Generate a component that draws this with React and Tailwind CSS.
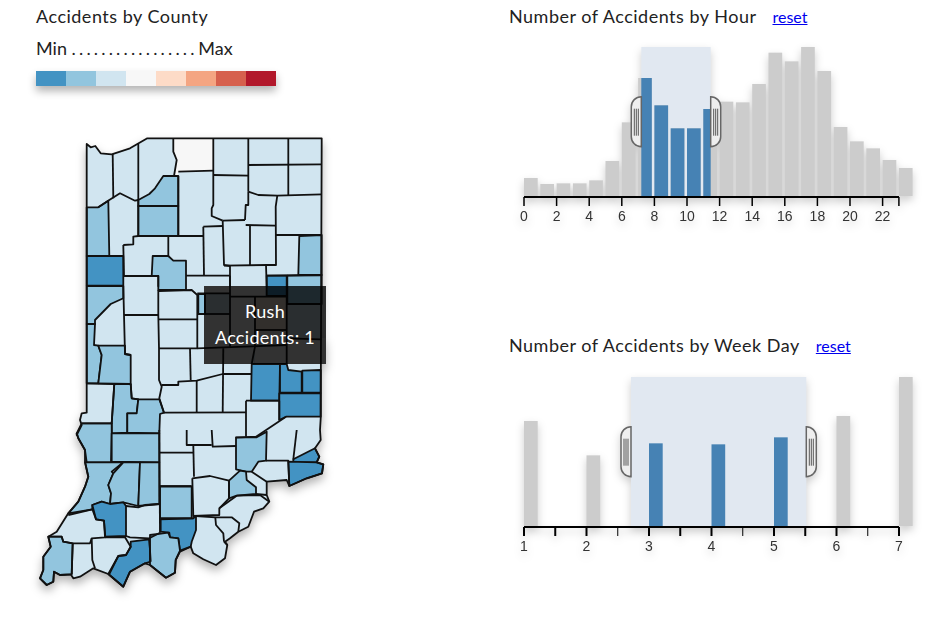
const z2 = (pts) => pts.map(([x, y]) => [70 + x / 3, 130 + y / 3]);
const z3 = (pts) => pts.map(([x, y]) => [70 + x / 3, 280 + y / 3]);
const z4 = (pts) => pts.map(([x, y]) => [30 + x / 3, 430 + y / 3]);
const toD = (pts, close) =>
  "M" + pts.map(([x, y]) => x.toFixed(1) + " " + y.toFixed(1)).join("L") + (close ? "Z" : "");

const LIGHT = "#d1e5f0";
const MID = "#92c5de";
const DARK = "#4393c3";

// state outline, clockwise from the north west corner
const outline = [
  ...z2([[50, 42], [62, 52], [76, 48], [92, 70], [125, 73], [180, 55], [232, 25], [755, 25]]),
  ...z3([[752, 415]]),
  ...z4([
    [870, 0], [872, 30], [855, 55], [868, 80], [860, 97], [880, 103], [876, 130], [830, 145], [778, 168],
    [770, 150], [710, 155], [710, 195], [718, 215], [700, 235], [672, 245], [655, 290], [625, 305], [600, 325],
    [585, 335], [592, 345], [585, 385], [558, 405], [520, 388], [490, 370], [482, 350], [450, 365], [437, 390],
    [435, 428], [408, 443], [360, 405], [345, 400], [300, 425], [280, 470], [235, 432], [190, 415], [150, 440],
    [130, 445], [122, 433], [90, 435], [72, 425], [70, 455], [50, 465], [30, 445], [40, 420], [40, 380],
    [62, 350], [55, 320], [80, 305], [115, 250], [145, 215], [165, 170], [175, 140], [165, 95], [165, 60],
    [145, 25], [140, 10],
  ]),
  ...z3([[20, 465], [35, 435], [30, 420], [35, 400], [50, 398]]),
];

// counties that are not the light base colour
const counties = [
  [MID, z2([[205, 210], [238, 192], [255, 175], [280, 138], [325, 138], [325, 228], [205, 228]])],
  [MID, z2([[205, 228], [325, 228], [325, 318], [205, 318]])],
  [MID, z2([[50, 232], [85, 232], [115, 212], [118, 378], [50, 378]])],
  [DARK, z2([[50, 378], [160, 378], [160, 467], [50, 467]])],
  [MID, z2([[688, 318], [755, 315], [755, 435], [685, 435]])],
  [DARK, z3([[590, -13], [652, -13], [652, 48], [590, 48]])],
  [MID, z3([[652, -13], [755, -15], [755, 72], [652, 72]])],
  [MID, z3([[248, -72], [295, -72], [310, -58], [348, -58], [348, 30], [265, 30], [265, -12], [245, -12]])],
  [MID, z3([[50, 18], [160, 18], [160, 55], [122, 72], [75, 120], [75, 132], [50, 132]])],
  [MID, z3([[50, 132], [75, 132], [72, 195], [85, 197], [95, 225], [85, 310], [50, 310]])],
  [MID, z3([[85, 197], [165, 197], [165, 222], [182, 225], [182, 312], [85, 310], [95, 225]])],
  [MID, z3([[385, 42], [405, 42], [405, 102], [385, 102]])],
  [DARK, z3([[545, 252], [630, 252], [628, 362], [543, 362]])],
  [DARK, z3([[630, 252], [650, 252], [655, 270], [695, 275], [695, 338], [630, 338]])],
  [DARK, z3([[697, 272], [752, 270], [752, 338], [697, 338]])],
  [DARK, z3([[628, 340], [752, 340], [752, 410], [648, 410], [628, 420]])],
  [MID, z3([[133, 312], [182, 312], [185, 355], [205, 358], [200, 400], [172, 400], [172, 458], [125, 460], [125, 430]])],
  [MID, z3([[205, 358], [268, 358], [282, 398], [270, 402], [268, 460], [172, 458], [172, 400], [200, 400]])],
  [MID, z4([[155, -20], [245, -20], [245, 10], [243, 97], [170, 97], [165, 60], [145, 25], [140, 10]])],
  [MID, z4([[245, 10], [388, 10], [388, 97], [245, 95]])],
  [MID, z4([[618, 22], [680, 22], [710, 5], [708, 92], [685, 95], [665, 125], [648, 125], [618, 118]])],
  [DARK, z4([[790, 88], [855, 55], [868, 80], [860, 97], [790, 97]])],
  [DARK, z4([[775, 95], [860, 97], [880, 103], [876, 130], [830, 145], [778, 168]])],
  [MID, z4([[597, 152], [630, 122], [648, 125], [650, 150], [678, 172], [678, 192], [620, 197], [597, 205]])],
  [MID, z4([[165, 97], [280, 97], [245, 125], [250, 130], [235, 165], [243, 190], [240, 222], [215, 215], [187, 225], [187, 238], [115, 250], [145, 215], [165, 170], [175, 140]])],
  [MID, z4([[280, 97], [330, 97], [325, 228], [280, 217], [240, 222], [243, 190], [235, 165], [250, 130]])],
  [MID, z4([[330, 97], [388, 97], [388, 222], [325, 228]])],
  [DARK, z4([[187, 225], [215, 215], [240, 222], [280, 217], [288, 228], [288, 318], [226, 320], [222, 272], [198, 268]])],
  [MID, z4([[390, 170], [485, 170], [485, 265], [390, 265]])],
  [DARK, z4([[392, 268], [490, 265], [498, 258], [498, 300], [485, 335], [482, 350], [450, 362], [445, 325], [420, 322], [418, 308], [392, 305]])],
  [MID, z4([[55, 320], [95, 320], [100, 335], [128, 340], [125, 433], [90, 435], [72, 425], [70, 455], [50, 465], [30, 445], [40, 420], [40, 380], [62, 350]])],
  [DARK, z4([[302, 335], [358, 328], [362, 395], [345, 400], [300, 425], [280, 470], [235, 432], [265, 378], [288, 375], [302, 350]])],
  [MID, z4([[360, 315], [415, 308], [420, 322], [445, 325], [450, 362], [437, 390], [435, 428], [408, 443], [360, 405]])],
];

// counties under the tooltip that show up neutral through it
const neutral = [
  [204, 286, 26, 7], [231, 286, 34, 10], [204, 315, 26, 32], [231, 297, 24, 50],
  [255, 330, 32, 34], [287, 338, 39, 26], [204, 348, 22, 16], [224, 347, 30, 17],
];

const lines = [
  z2([[128, 72], [130, 205]]),
  z2([[205, 42], [205, 318]]),
  z2([[310, 25], [310, 65], [320, 90], [312, 138]]),
  z2([[430, 25], [430, 225], [425, 235], [425, 258], [458, 272]]),
  z2([[535, 25], [535, 185]]),
  z2([[655, 25], [655, 195]]),
  z2([[535, 105], [755, 103]]),
  z2([[430, 135], [535, 137]]),
  z2([[325, 125], [430, 122]]),
  z2([[325, 138], [325, 318]]),
  z2([[85, 232], [118, 210], [150, 190], [195, 212], [205, 210]]),
  z2([[160, 345], [190, 343], [190, 320], [205, 318], [400, 318]]),
  z2([[160, 345], [162, 438]]),
  z2([[162, 438], [265, 438], [265, 470]]),
  z2([[295, 320], [295, 378]]),
  z2([[348, 437], [480, 437]]),
  z2([[400, 290], [458, 288]]),
  z2([[400, 290], [402, 437]]),
  z2([[458, 272], [525, 270]]),
  z2([[458, 272], [462, 405], [480, 408]]),
  z2([[535, 185], [565, 195], [622, 197], [755, 193]]),
  z2([[525, 270], [527, 225], [535, 225], [535, 185]]),
  z2([[527, 285], [615, 287]]),
  z2([[540, 288], [540, 405]]),
  z2([[622, 197], [617, 230], [618, 405], [590, 405], [462, 407]]),
  z2([[618, 315], [755, 315]]),
  z2([[480, 408], [480, 470]]),
  z2([[588, 405], [590, 470]]),
  z2([[590, 437], [755, 435]]),
  z3([[160, 18], [162, 105], [165, 222], [182, 225]]),
  z3([[162, 105], [265, 105]]),
  z3([[265, 30], [265, 105], [267, 205], [267, 300], [275, 320], [268, 355], [282, 398], [528, 397]]),
  z3([[267, 118], [382, 118]]),
  z3([[267, 33], [365, 30], [382, 45], [382, 205], [360, 205], [267, 205]]),
  z3([[382, 40], [480, 40]]),
  z3([[480, -13], [480, 200]]),
  z3([[480, 50], [650, 50]]),
  z3([[555, 50], [555, 200], [545, 252]]),
  z3([[650, -13], [650, 252]]),
  z3([[650, 72], [755, 72]]),
  z3([[555, 150], [650, 150]]),
  z3([[650, 175], [755, 178]]),
  z3([[385, 102], [480, 102]]),
  z3([[382, 205], [650, 195]]),
  z3([[460, 205], [458, 397]]),
  z3([[360, 205], [362, 300]]),
  z3([[275, 315], [325, 315], [325, 305], [380, 302], [458, 282], [545, 282]]),
  z3([[380, 302], [380, 398]]),
  z3([[528, 362], [628, 362]]),
  z3([[528, 362], [528, 470]]),
  z3([[628, 362], [628, 420]]),
  z3([[648, 410], [558, 470], [497, 473]]),
  z3([[50, 310], [133, 312], [125, 430], [35, 430]]),
  z3([[182, 312], [185, 355], [205, 358]]),
  z4([[470, 0], [470, 45], [492, 45], [545, 45]]),
  z4([[545, 0], [548, 50], [618, 48]]),
  z4([[490, 45], [492, 140]]),
  z4([[390, 68], [492, 68]]),
  z4([[390, 168], [485, 168]]),
  z4([[388, 0], [390, 308]]),
  z4([[487, 145], [540, 138], [597, 152], [597, 205], [568, 235], [568, 255], [490, 258], [487, 145]]),
  z4([[708, 92], [775, 92], [778, 168]]),
  z4([[800, 0], [790, 88]]),
  z4([[665, 125], [710, 155]]),
  z4([[678, 192], [710, 195]]),
  z4([[620, 197], [690, 195], [718, 215]]),
  z4([[568, 235], [620, 197]]),
  z4([[625, 305], [628, 280], [605, 262], [556, 262], [498, 258]]),
  z4([[556, 262], [558, 285], [580, 310], [582, 335]]),
  z4([[115, 255], [187, 238], [198, 268], [222, 272], [225, 322], [185, 325], [180, 340], [128, 340], [100, 335], [95, 320], [55, 320]]),
  z4([[128, 340], [125, 433]]),
  z4([[185, 325], [187, 390], [195, 415]]),
  z4([[225, 322], [285, 322], [302, 350], [288, 375], [265, 378], [238, 432]]),
  z4([[288, 228], [325, 232], [345, 225], [388, 222]]),
  z4([[288, 318], [300, 322], [358, 325], [390, 308]]),
  z4([[358, 325], [362, 395]]),
  z4([[388, 265], [490, 265]]),
  z4([[592, 345], [582, 335]]),
];

const rush = z3([[555, 50], [650, 50], [650, 150], [555, 150]]);

function IndianaMap() {
  return (
    <svg viewBox="36 130 300 470" className="mt-[44px] w-[300px] h-[470px] drop-shadow-[0_5px_5px_rgba(0,0,0,0.3)]">
      <path d={toD(outline, true)} fill={LIGHT} />
      {neutral.map(([x, y, w, h], i) => (
        <rect key={i} x={x} y={y} width={w} height={h} fill="#f7f7f7" />
      ))}
      {/* 회색으로 보이는 북쪽 카운티 */}
      <path d={toD(z2([[310, 25], [430, 25], [430, 122], [325, 125], [325, 138], [312, 138], [320, 90], [310, 65]]), true)} fill="#f7f7f7" />
      {counties.map(([fill, pts], i) => (
        <path key={i} d={toD(pts, true)} fill={fill} stroke="#111" strokeWidth="1.8" strokeLinejoin="round" />
      ))}
      <path d={toD(rush, true)} fill="#f7e8dc" />
      {lines.map((pts, i) => (
        <path key={i} d={toD(pts)} fill="none" stroke="#111" strokeWidth="1.8" strokeLinejoin="round" />
      ))}
      <path d={toD(outline, true)} fill="none" stroke="#111" strokeWidth="1.8" strokeLinejoin="round" />
    </svg>
  );
}

function Handle({ x, y, dir }) {
  const edge = x + dir * 10;
  const sweep = dir < 0 ? 0 : 1;
  return (
    <g>
      <path
        d={`M${x} ${y}A10 10 0 0 ${sweep} ${edge} ${y + 10}V${y + 40}A10 10 0 0 ${sweep} ${x} ${y + 50}Z`}
        fill="#eeeeee"
        stroke="#666666"
        strokeWidth="1.5"
      />
      {[3, 5, 7].map((o) => (
        <path key={o} d={`M${x + dir * o} ${y + 12}V${y + 39}`} stroke="#555555" strokeWidth="1" />
      ))}
    </g>
  );
}

const hourTops = [534, 552, 550, 550, 541, 483, 367, 234, 316, 385, 385, 327, 305, 307, 252, 158, 184, 141, 213, 381, 424, 445, 480, 504];
const hourX = (h) => 524 + h * 16.3;
const hourLabels = [0, 2, 4, 6, 8, 10, 12, 14, 16, 18, 20, 22];

function HourChart() {
  const left = 641.3;
  const right = 710.7;
  return (
    <svg viewBox="509 40 428 190" className="mt-2 w-[428px] h-[190px] drop-shadow-[0_4px_4px_rgba(0,0,0,0.2)]">
      <rect x={left} y="47" width={right - left} height="149" fill="#e1e8f1" />
      {hourTops.map((t, h) => {
        const x = hourX(h);
        const y = t / 3;
        const selected = x + 13.7 > left && x < right;
        if (!selected) return <rect key={h} x={x} y={y} width="13.7" height={196 - y} fill="#cccccc" />;
        const bx = Math.max(x, left);
        const bw = Math.min(x + 13.7, right) - bx;
        return (
          <g key={h}>
            <rect x={x} y={y} width="13.7" height={196 - y} fill="#cccccc" />
            <rect x={bx} y={y} width={bw} height={196 - y} fill="#4682b4" />
          </g>
        );
      })}
      <path d="M524 197H899" stroke="#000" strokeWidth="2" />
      {[...hourLabels, 23].map((h) => (
        <path key={h} d={`M${hourX(h)} 197V206`} stroke="#000" strokeWidth="1.5" />
      ))}
      {hourLabels.map((h) => (
        <text key={h} x={hourX(h)} y="221" textAnchor="middle" fontSize="14" fill="#333" fontFamily="'Liberation Sans', sans-serif">
          {h}
        </text>
      ))}
      <Handle x={left} y={96.7} dir={-1} />
      <Handle x={right} y={96.7} dir={1} />
    </svg>
  );
}

const dayTops = [273, 376, 340, 343, 322, 258, 141];
const dayX = (d) => 524 + (d - 1) * 62.5;

function DayChart() {
  return (
    <svg viewBox="509 370 428 190" className="mt-[9px] w-[428px] h-[190px] drop-shadow-[0_4px_4px_rgba(0,0,0,0.2)]">
      <rect x="631" y="377" width="175.3" height="149" fill="#e1e8f1" />
      {dayTops.map((t, i) => {
        const d = i + 1;
        const y = 330 + t / 3;
        return (
          <rect key={d} x={dayX(d)} y={y} width="13.7" height={526 - y} fill={d >= 3 && d <= 5 ? "#4682b4" : "#cccccc"} />
        );
      })}
      <path d="M524 527H899" stroke="#000" strokeWidth="2" />
      {[1, 1.5, 2, 2.5, 3, 3.5, 4, 4.5, 5, 5.5, 6, 6.5, 7].map((d) => (
        <path key={d} d={`M${dayX(d)} 527V536`} stroke="#000" strokeWidth={[2.5, 4.5, 6.5].includes(d) ? 1 : 2} />
      ))}
      {[1, 2, 3, 4, 5, 6, 7].map((d) => (
        <text key={d} x={dayX(d)} y="551" textAnchor="middle" fontSize="14" fill="#333" fontFamily="'Liberation Sans', sans-serif">
          {d}
        </text>
      ))}
      <Handle x={631} y={426.7} dir={-1} />
      <Handle x={806.3} y={426.7} dir={1} />
    </svg>
  );
}

const legend = [
  "bg-[#4393c3]", "bg-[#92c5de]", "bg-[#d1e5f0]", "bg-[#f7f7f7]",
  "bg-[#fddbc7]", "bg-[#f4a582]", "bg-[#d6604d]", "bg-[#b2182b]",
];

export default function App() {
  return (
    <main className="relative flex w-[937px] h-[619px] overflow-hidden bg-white text-[#222] font-['Lato',sans-serif]">
      {/* 지도 */}
      <section className="w-[509px] shrink-0 pl-9">
        <h2 className="text-[18px] leading-8 font-normal tracking-[0.5px]">Accidents by County</h2>
        <p className="text-[18px] leading-8">
          Min <span className="tracking-[-0.72px]">. . . . . . . . . . . . . . . . .</span> Max
        </p>
        <div className="mt-[7px] flex w-[240px] h-[15px] shadow-[0_5px_8px_rgba(0,0,0,0.3)]">
          {legend.map((c) => (
            <div key={c} className={`w-[30px] ${c}`} />
          ))}
        </div>
        <IndianaMap />
      </section>

      {/* 차트 */}
      <section className="w-[428px] shrink-0">
        <div className="flex h-8 items-center gap-4">
          <h2 className="text-[18px] font-normal tracking-[0.5px]">Number of Accidents by Hour</h2>
          <a href="#" className="pt-0.5 text-base text-[#0000ee] underline">reset</a>
        </div>
        <HourChart />
        <div className="mt-[99px] flex h-8 items-center gap-4">
          <h2 className="text-[18px] font-normal tracking-[0.5px]">Number of Accidents by Week Day</h2>
          <a href="#" className="pt-0.5 text-base text-[#0000ee] underline">reset</a>
        </div>
        <DayChart />
      </section>

      {/* 툴팁 */}
      <div className="absolute left-[204px] top-[286px] w-[122px] h-[78px] pb-[2px] flex flex-col items-center justify-center bg-black/80 text-[18px] leading-[26px] tracking-[0.3px] text-white">
        <span>Rush</span>
        <span>Accidents: 1</span>
      </div>
    </main>
  );
}
